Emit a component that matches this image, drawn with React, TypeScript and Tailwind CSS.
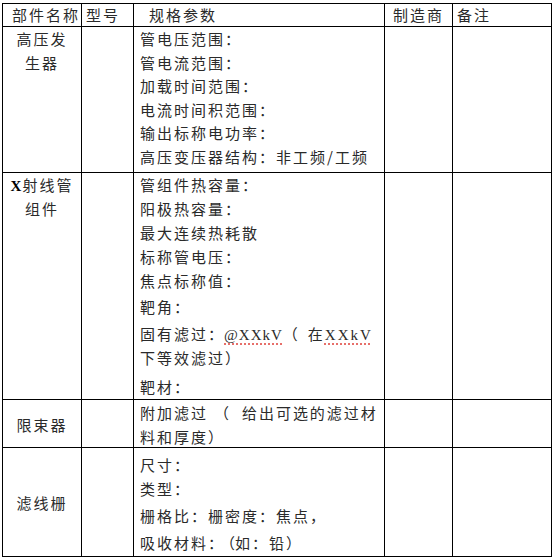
import React from "react";

const cjk = "font-['Noto_Sans_CJK_SC',sans-serif]";
const serif = "font-['Liberation_Serif','Noto_Sans_CJK_SC',serif]";

function L({ children, cls = "" }: { children: React.ReactNode; cls?: string }) {
  return <div className={`h-[24px] leading-[24px] whitespace-nowrap ${cls}`}>{children}</div>;
}

function L1({ children }: { children: React.ReactNode }) {
  return <div className="h-[23.5px] leading-[23.5px] whitespace-nowrap">{children}</div>;
}

export default function App() {
  return (
    <div className={`w-[554px] h-[560px] bg-white pt-[3px] pl-[2px] text-[15px] tracking-[2px] text-[#2a2a2a] ${cjk}`}>
      <div className="grid w-[550px] grid-cols-[78px_51px_250px_67px_98px] grid-rows-[22px_145px_226px_47px_108px] gap-px border border-black bg-black">
        {/* header */}
        <div className="bg-white pl-[9px] leading-[22px] whitespace-nowrap">部件名称</div>
        <div className="bg-white pl-[4px] leading-[22px] whitespace-nowrap">型号</div>
        <div className="bg-white pl-[15px] leading-[22px] whitespace-nowrap">规格参数</div>
        <div className="bg-white pl-[8px] leading-[22px] whitespace-nowrap">制造商</div>
        <div className="bg-white pl-[4px] leading-[22px] whitespace-nowrap">备注</div>

        {/* row 1 */}
        <div className="bg-white text-center">
          <L1>高压发</L1>
          <L1>生器</L1>
        </div>
        <div className="bg-white" />
        <div className="bg-white pl-[6px]">
          <L1>管电压范围：</L1>
          <L1>管电流范围：</L1>
          <L1>加载时间范围：</L1>
          <L1>电流时间积范围：</L1>
          <L1>输出标称电功率：</L1>
          <L1>高压变压器结构：非工频/工频</L1>
        </div>
        <div className="bg-white" />
        <div className="bg-white" />

        {/* row 2 */}
        <div className="bg-white text-center">
          <L>
            <span className={`${serif} font-bold text-black tracking-[1px]`}>X</span>射线管
          </L>
          <L>组件</L>
        </div>
        <div className="bg-white" />
        <div className="bg-white pl-[6px] overflow-hidden">
          <L>管组件热容量：</L>
          <L>阳极热容量：</L>
          <L>最大连续热耗散</L>
          <L>标称管电压：</L>
          <L>焦点标称值：</L>
          <L cls="mt-[1.5px]">靶角：</L>
          <L cls="mt-[3.8px]">
            <span>固有滤过</span>
            <span className="inline-block w-[16px] tracking-normal">：</span>
            <span className={`${serif} tracking-[1px] underline decoration-dotted decoration-[#e0403a] underline-offset-[3px]`}>@XXkV</span>
            <span className="tracking-normal">（</span>
            <span className="ml-[10px]">在</span>
            <span className={`${serif} tracking-[2px] underline decoration-dotted decoration-[#e0403a] underline-offset-[3px]`}>XXkV</span>
          </L>
          <L>下等效滤过）</L>
          <L cls="mt-[4.4px]">靶材：</L>
        </div>
        <div className="bg-white" />
        <div className="bg-white" />

        {/* row 3 */}
        <div className="bg-white flex items-center justify-center pt-[3px] whitespace-nowrap">限束器</div>
        <div className="bg-white" />
        <div className="bg-white pl-[6px] pt-[1px]">
          <L>
            <span>附加滤过</span>
            <span className="ml-[6px] tracking-normal">（</span>
            <span className="ml-[13px] tracking-[1.95px]">给出可选的滤过材</span>
          </L>
          <L>料和厚度）</L>
        </div>
        <div className="bg-white" />
        <div className="bg-white" />

        {/* row 4 */}
        <div className="bg-white flex items-center justify-center pt-[3px] whitespace-nowrap">滤线栅</div>
        <div className="bg-white" />
        <div className="bg-white pl-[6px] pt-[4.5px]">
          <L>尺寸：</L>
          <L>类型：</L>
          <L cls="mt-[3.5px]">栅格比：栅密度：焦点，</L>
          <L cls="mt-[2.5px]">
            <span>吸收材料</span>
            <span className="inline-block w-[12px] tracking-normal">：</span>
            <span className="tracking-normal">（</span>
            <span>如：铅）</span>
          </L>
        </div>
        <div className="bg-white" />
        <div className="bg-white" />
      </div>
    </div>
  );
}
